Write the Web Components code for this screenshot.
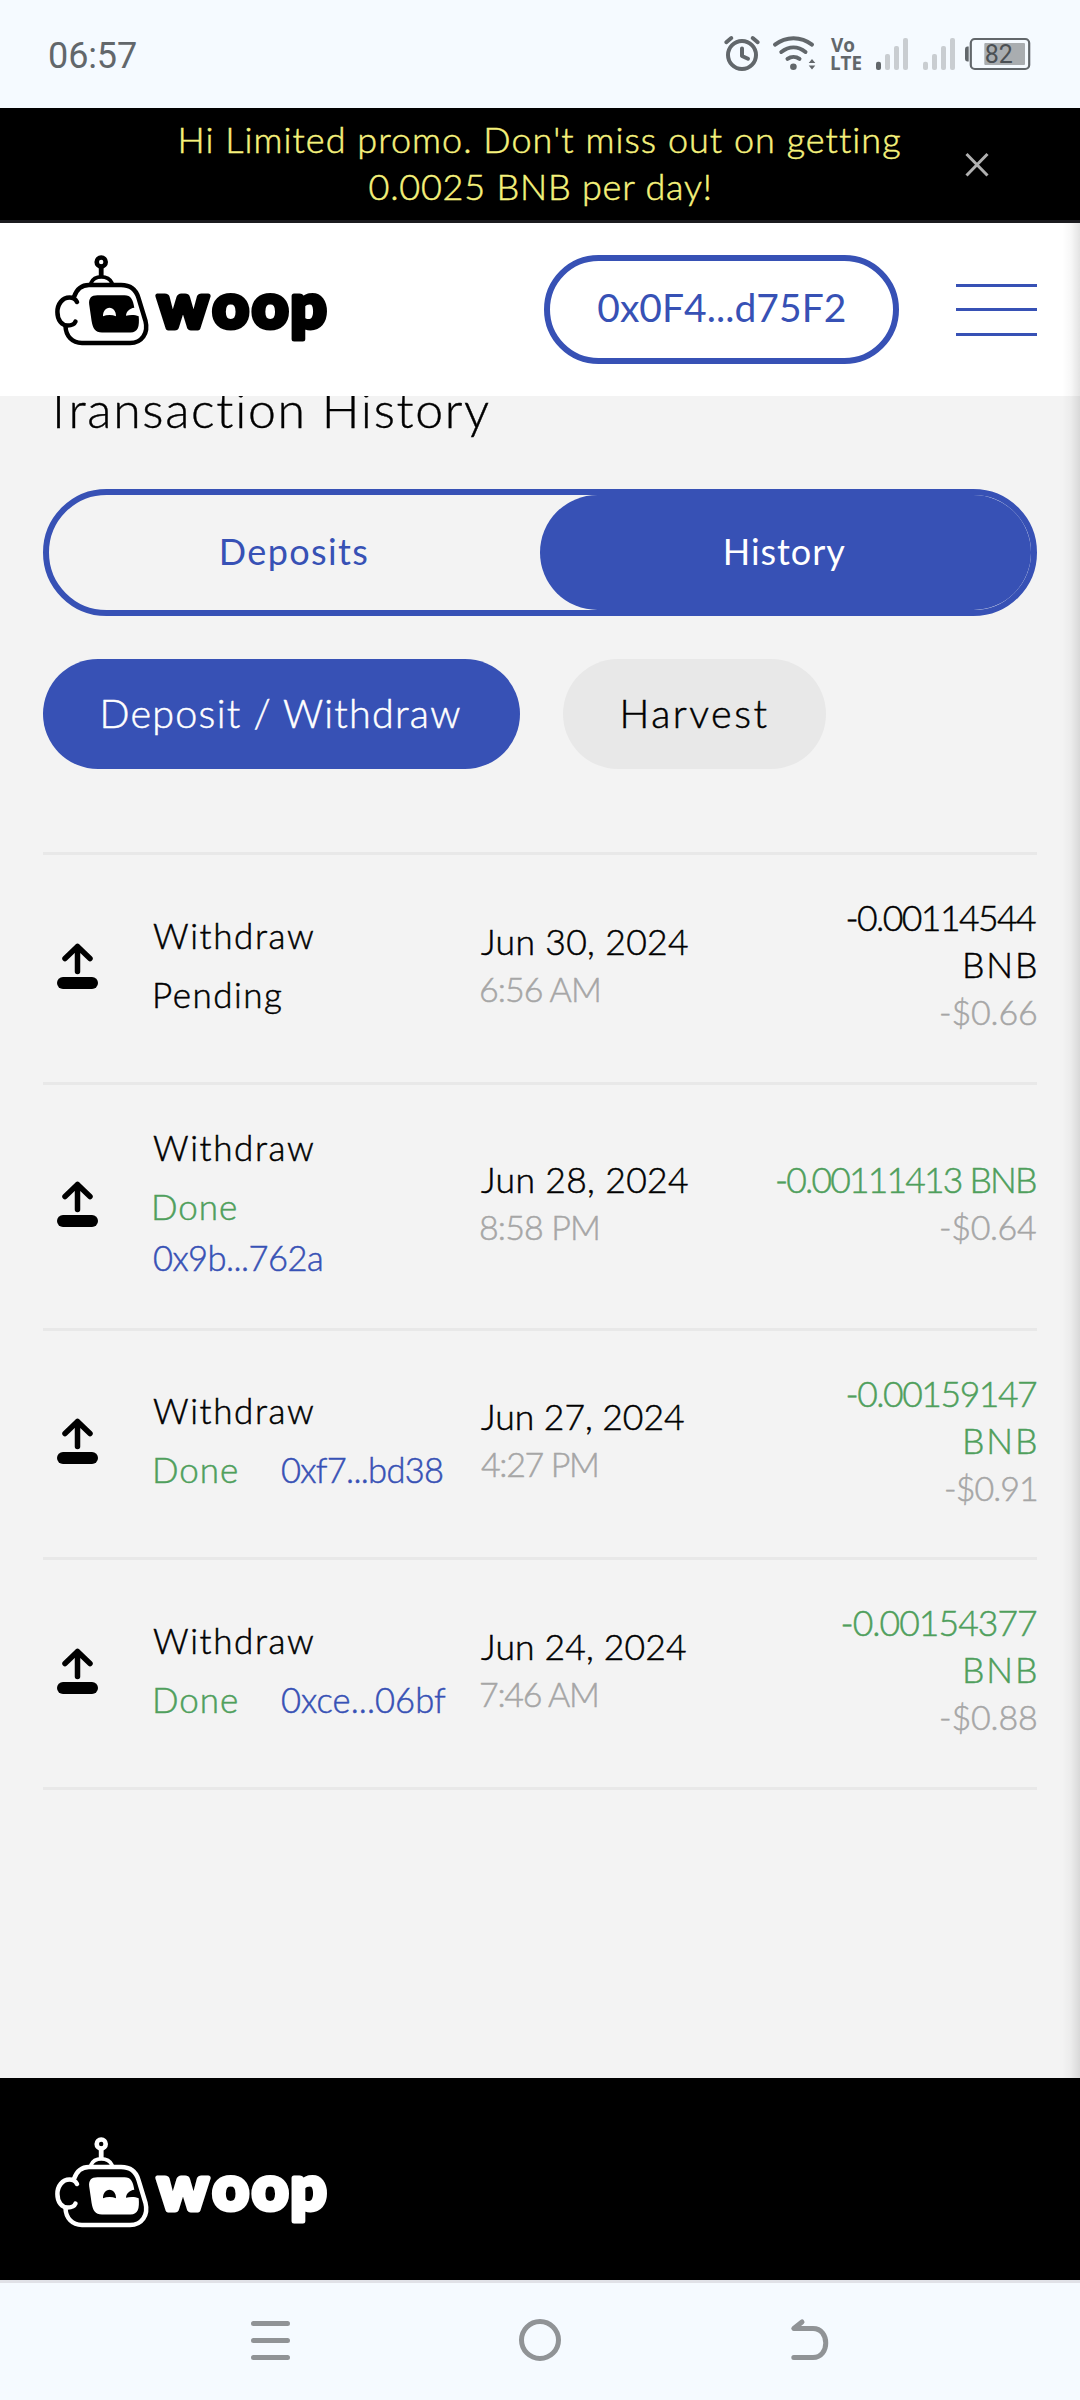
<!DOCTYPE html>
<html lang="en">
<head>
<meta charset="utf-8">
<title>Woop – Transaction History</title>
<style>
html,body{margin:0;padding:0}
body{width:1080px;height:2400px;overflow:hidden;background:#f3f3f3;font-family:Lato,"Open Sans",sans-serif;font-weight:300;color:#000}
</style>
</head>
<body>
<woop-screen></woop-screen>
<script>
const BLUE = '#3751b5', GREEN = '#4f9f5c', GREY = '#a6a6a6';

class Base extends HTMLElement {
  constructor() { super(); this.attachShadow({ mode: 'open' }); }
  connectedCallback() { this.shadowRoot.innerHTML = this.render(); }
  attr(name, fallback = '') { return this.getAttribute(name) ?? fallback; }
}

/* One line of text tracked so that its ink fills the width in the "w" attribute. */
customElements.define('fit-text', class extends Base {
  render() {
    const text = this.attr('text'), w = +this.attr('w'), size = +this.attr('size', 35), lh = this.attr('lh', 47);
    const family = this.attr('family', 'Lato'), weight = this.attr('weight', 300);
    const ctx = document.createElement('canvas').getContext('2d');
    ctx.font = `${weight} ${size}px ${family}`;
    const m = ctx.measureText(text);
    const ink = m.actualBoundingBoxRight + m.actualBoundingBoxLeft;
    const gap = (w - ink) / (text.length - 1);
    return `<style>
      :host{display:block;width:${w}px;height:${lh}px;line-height:${lh}px;white-space:pre;flex:none;
        font-family:${family},"Open Sans",sans-serif;font-weight:${weight};font-size:${size}px;
        font-kerning:normal;letter-spacing:${gap.toFixed(3)}px;text-indent:${m.actualBoundingBoxLeft.toFixed(2)}px;
        color:${this.attr('color', 'inherit')};-webkit-text-stroke:${this.attr('stroke', '.5')}px currentColor}
      span{display:block;width:max-content}
      </style><span>${text}</span>`;
  }
});

customElements.define('status-bar', class extends Base {
  bars(x, first) {
    return [61.7, 54, 46, 38].map((y, i) =>
      `<rect x="${x + i * 9}" y="${y}" width="5" height="${70 - y}" rx="2" fill="${i === 0 ? first : '#c9cdd1'}"/>`).join('');
  }
  render() {
    return `<style>
      :host{display:flex;justify-content:space-between;height:108px;background:#f5faff;box-sizing:border-box;padding-left:50px}
      fit-text{margin-top:31px}
      svg{display:block}
      </style>
      <fit-text text="06:57" w="86" size="36" lh="50" family="Roboto" weight="400" stroke="0" color="#62676b"></fit-text>
      <svg width="370" height="108" viewBox="710 0 370 108" fill="none" stroke="#62676b" stroke-linecap="round" stroke-linejoin="round">
        <circle cx="742" cy="55" r="14" stroke-width="4"/>
        <path d="M742 48.5V56L748 58.7" stroke-width="4"/>
        <path d="M726.3 42.2L731.3 38M757.7 42.2L752.7 38" stroke-width="4"/>
        <path d="M775 44.6C786 36 801 36 812 44.6M781.3 52C789 46 798 46 805.5 52M787.5 58.8C791 56.3 796 56.3 799.5 58.8" stroke-width="4"/>
        <g fill="#62676b" stroke="none">
          <circle cx="793.4" cy="66.8" r="3.3"/>
          <path d="M812 59L815.3 63H808.7ZM812 69.5L815.3 65.5H808.7Z"/>
          <text x="831" y="52.3" font-family="Open Sans" font-weight="700" font-size="19" textLength="24" lengthAdjust="spacingAndGlyphs">Vo</text>
          <text x="830" y="70" font-family="Open Sans" font-weight="700" font-size="19.5" textLength="32" lengthAdjust="spacingAndGlyphs">LTE</text>
          ${this.bars(876, '#62676b')}${this.bars(923, '#c9cdd1')}
          <path d="M968.7 46.5V61.5H967.5Q965 61.5 965 58.5V49.5Q965 46.5 967.5 46.5Z"/>
          <rect x="984.3" y="43" width="40.7" height="22" rx="1" fill="#a9adb0"/>
          <text x="984.8" y="63.2" font-family="Roboto" font-weight="400" font-size="25" fill="#4b5054">82</text>
        </g>
        <rect x="970.8" y="39" width="58.4" height="30" rx="4" stroke-width="2.2"/>
      </svg>`;
  }
});

customElements.define('promo-banner', class extends Base {
  render() {
    return `<style>
      :host{display:flex;justify-content:center;height:115px;box-sizing:border-box;background:#000;border-bottom:3px solid #1b1b1f;
        color:#f6f27c;padding-top:8px;position:relative}
      div{display:flex;flex-direction:column;align-items:center}
      svg{position:absolute;left:962px;top:42px}
      </style>
      <div>
        <fit-text text="Hi Limited promo. Don't miss out on getting" w="719" size="36"></fit-text>
        <fit-text text="0.0025 BNB per day!" w="341" size="36"></fit-text>
      </div>
      <svg width="30" height="30" viewBox="0 0 30 30" stroke="#b0b0b0" stroke-width="3"><path d="M4.5 4L25.5 25.5M25.5 4L4.5 25.5"/></svg>`;
  }
});

customElements.define('woop-logo', class extends Base {
  render() {
    return `<style>:host{display:block;width:290px;height:100px}svg{display:block}</style>
      <svg width="290" height="100" viewBox="50 255 290 100" fill="none" stroke="currentColor" stroke-linecap="round" stroke-linejoin="round">
        <circle cx="101.2" cy="262" r="4.5" stroke-width="4.6"/>
        <path d="M101.2 267V275.5" stroke-width="4.8"/>
        <path d="M91 283C94.5 274.8 108 274.8 112 283" stroke-width="3.8"/>
        <path stroke-width="4.5" d="M74 297C76.5 289.5 80.5 285 89 285H121C131 285 136.2 290 138.5 298L145.5 321C148.5 333 142 343 130 343H82C72 343 66 336 65.5 326.5"/>
        <path stroke-width="4.5" d="M77 302C75.5 299 72.5 297.5 69.5 297.5C62.5 297.5 57.4 304 57.4 312C57.4 320.5 62 325.5 67.5 325.5C71.5 325.5 74.5 324 75.5 321.5"/>
        <path fill="currentColor" stroke="none" fill-rule="evenodd" d="M97.5 295.3H124.500C131 295.3 133 299.5 134.3 307.8C129.5 308.5 126.3 311.5 126 315.8C130 314.6 135 314.6 138.7 316.2C139.6 326.5 138 332.3 130.5 332.4H102C95 332.4 93 328.5 91.6 321L89.2 304.5C88.6 298.5 91 295.3 97.5 295.3ZM103 316.2C107 314.6 112 314.6 116 316.2C116 311.5 113.5 307.8 109.5 307.8C105.5 307.8 103 311.5 103 316.2Z"/>
        <text y="328" x="157.5 212.5 252 290.5" font-family="Lato" font-weight="900" font-size="63" fill="currentColor" stroke-width="5">woop</text>
      </svg>`;
  }
});

customElements.define('site-header', class extends Base {
  render() {
    return `<style>
      :host{display:flex;align-items:center;height:173px;background:#fff;box-sizing:border-box;padding:0 43px 0 50px}
      button{all:unset;box-sizing:border-box;margin-left:auto;width:355px;height:109px;border:6px solid ${BLUE};border-radius:55px;
        display:flex;align-items:center;justify-content:center;padding-bottom:5px;color:${BLUE}}
      nav{display:flex;flex-direction:column;gap:21.5px;margin-left:57px;width:81px}
      i{height:3px;background:${BLUE}}
      woop-logo{margin-bottom:9px}
      </style>
      <woop-logo></woop-logo>
      <button><fit-text text="0x0F4...d75F2" w="246.5" size="39" weight="400" stroke="0"></fit-text></button>
      <nav><i></i><i></i><i></i></nav>`;
  }
});

customElements.define('tab-switch', class extends Base {
  render() {
    return `<style>
      :host{display:flex;height:127px;box-sizing:border-box;border:6px solid ${BLUE};border-radius:64px;color:${BLUE}}
      div{flex:1;display:flex;align-items:center;justify-content:center;border-radius:58px;padding-bottom:2px}
      .on{background:${BLUE};color:#fff}
      </style>
      <div><fit-text text="Deposits" w="145.5" size="36" weight="400" stroke="0"></fit-text></div>
      <div class="on"><fit-text text="History" w="119.5" size="36" weight="400" stroke="0"></fit-text></div>`;
  }
});

customElements.define('filter-pill', class extends Base {
  render() {
    const on = this.hasAttribute('active');
    return `<style>
      :host{display:flex;height:110px;box-sizing:border-box;padding:0 59px 4px 60.5px;border-radius:55px;align-items:center;
        background:${on ? BLUE : '#e8e8e8'};color:${on ? '#fff' : '#000'}}
      </style><fit-text text="${this.attr('label')}" w="${this.attr('w')}" size="39.5"></fit-text>`;
  }
});

customElements.define('tx-row', class extends Base {
  render() {
    const d = JSON.parse(this.attr('data'));
    const amountColor = d.status[0] === 'Done' ? GREEN : '#000';
    const line = ([text, w], lh, color = '#000', size = 35.5) =>
      `<fit-text text="${text}" w="${w}" lh="${lh}" color="${color}" size="${size}"></fit-text>`;
    return `<style>
      :host{display:grid;grid-template-columns:110px 328px 1fr auto;align-items:center;height:${d.h}px;border-bottom:3px solid #e8e8e8}
      svg{display:block;margin:0 0 6px 14px}
      section{padding-bottom:8px}
      .kind{padding-bottom:${d.wrap ? 16 : 8}px}
      .state{display:flex;column-gap:45px;margin-left:${d.wrap ? 1 : 2}px;flex-direction:${d.wrap ? 'column' : 'row'}}
      .sum{display:flex;grid-column:4;flex-direction:column;align-items:flex-end;margin-right:1px}
      </style>
      <svg width="41" height="46" viewBox="0 0 41 46" fill="none" stroke="#000" stroke-width="5.5" stroke-linecap="round" stroke-linejoin="round">
        <path d="M20.5 3.5V28.5M8 15.5L20.5 3.5L33 15.5"/><rect x="0" y="34" width="41" height="12" rx="6" fill="#000" stroke="none"/>
      </svg>
      <section class="kind">
        ${line(['Withdraw', 160], 59, '#000', 35)}
        <div class="state">${line(d.status, 59, amountColor, 35)}${d.hash ? line(d.hash, d.wrap ? 44 : 59, BLUE, 34.5) : ''}</div>
      </section>
      <section>${line(d.date, 47)}${line(d.time, 47, GREY, 34)}</section>
      <section class="sum">${d.amount.map(a => line(a, 47, amountColor)).join('')}${line(d.usd, 47, GREY, 34)}</section>`;
  }
});

customElements.define('history-page', class extends Base {
  render() {
    const rows = [
      { h: 227, status: ['Pending', 126], date: ['Jun 30, 2024', 207], time: ['6:56 AM', 119], amount: [['-0.00114544', 188.5], ['BNB', 71]], usd: ['-$0.66', 95] },
      { h: 243, wrap: 1, status: ['Done', 82], hash: ['0x9b...762a', 168], date: ['Jun 28, 2024', 207], time: ['8:58 PM', 117], amount: [['-0.00111413 BNB', 259]], usd: ['-$0.64', 95] },
      { h: 226, status: ['Done', 82], hash: ['0xf7...bd38', 160], date: ['Jun 27, 2024', 203], time: ['4:27 PM', 116], amount: [['-0.00159147', 188.5], ['BNB', 71]], usd: ['-$0.91', 90] },
      { h: 227, status: ['Done', 82], hash: ['0xce...06bf', 164], date: ['Jun 24, 2024', 205], time: ['7:46 AM', 117], amount: [['-0.00154377', 193.5], ['BNB', 71]], usd: ['-$0.88', 95] }
    ];
    return `<style>
      :host{display:flex;flex-direction:column;height:1682px;box-sizing:border-box;overflow:hidden;padding:0 43px;background:#f3f3f3}
      h1{margin:-17px 0 50px 1px;font:inherit}
      .pills{display:flex;gap:43px;margin:43px 0 83px}
      .list{border-top:3px solid #e8e8e8}
      </style>
      <h1><fit-text text="Transaction History" w="446" size="50" lh="60" stroke=".4"></fit-text></h1>
      <tab-switch></tab-switch>
      <div class="pills"><filter-pill active label="Deposit / Withdraw" w="357.5"></filter-pill><filter-pill label="Harvest" w="143"></filter-pill></div>
      <div class="list">${rows.map(r => `<tx-row data='${JSON.stringify(r)}'></tx-row>`).join('')}</div>`;
  }
});

customElements.define('site-footer', class extends Base {
  render() {
    return `<style>:host{display:flex;height:202px;box-sizing:border-box;padding:59px 50px 0;background:#000;color:#fff}</style><woop-logo></woop-logo>`;
  }
});

customElements.define('nav-bar', class extends Base {
  render() {
    return `<style>
      :host{display:flex;justify-content:space-between;align-items:center;height:120px;box-sizing:border-box;border-top:3px solid #e0e1e7;
        background:#f5faff;padding:0 246px 3px 246px}
      svg{display:block}
      </style>
      ${['<path d="M7.5 6.5H41.5M7.5 23.5H41.5M7.5 40.5H41.5"/>',
         '<circle cx="24" cy="23" r="18.5"/>',
         '<path d="M16 5L7.8 11.5H27C44 11.5 44 40.5 27 40.5H7.8"/>'].map(p =>
        `<svg width="48" height="46" viewBox="0 0 48 46" fill="none" stroke="#909396" stroke-width="5" stroke-linecap="round" stroke-linejoin="round">${p}</svg>`).join('')}`;
  }
});

customElements.define('woop-screen', class extends Base {
  render() {
    return `<style>
      :host{display:flex;flex-direction:column;width:1080px;height:2400px;position:relative}
      .edge{position:absolute;right:0;top:223px;width:18px;height:1855px;background:linear-gradient(to right,rgba(0,0,0,0),rgba(0,0,0,.03) 50%,rgba(0,0,0,.11))}
      </style>
      <status-bar></status-bar><promo-banner></promo-banner><site-header></site-header>
      <history-page></history-page><site-footer></site-footer><nav-bar></nav-bar><div class="edge"></div>`;
  }
});
</script>
</body>
</html>
